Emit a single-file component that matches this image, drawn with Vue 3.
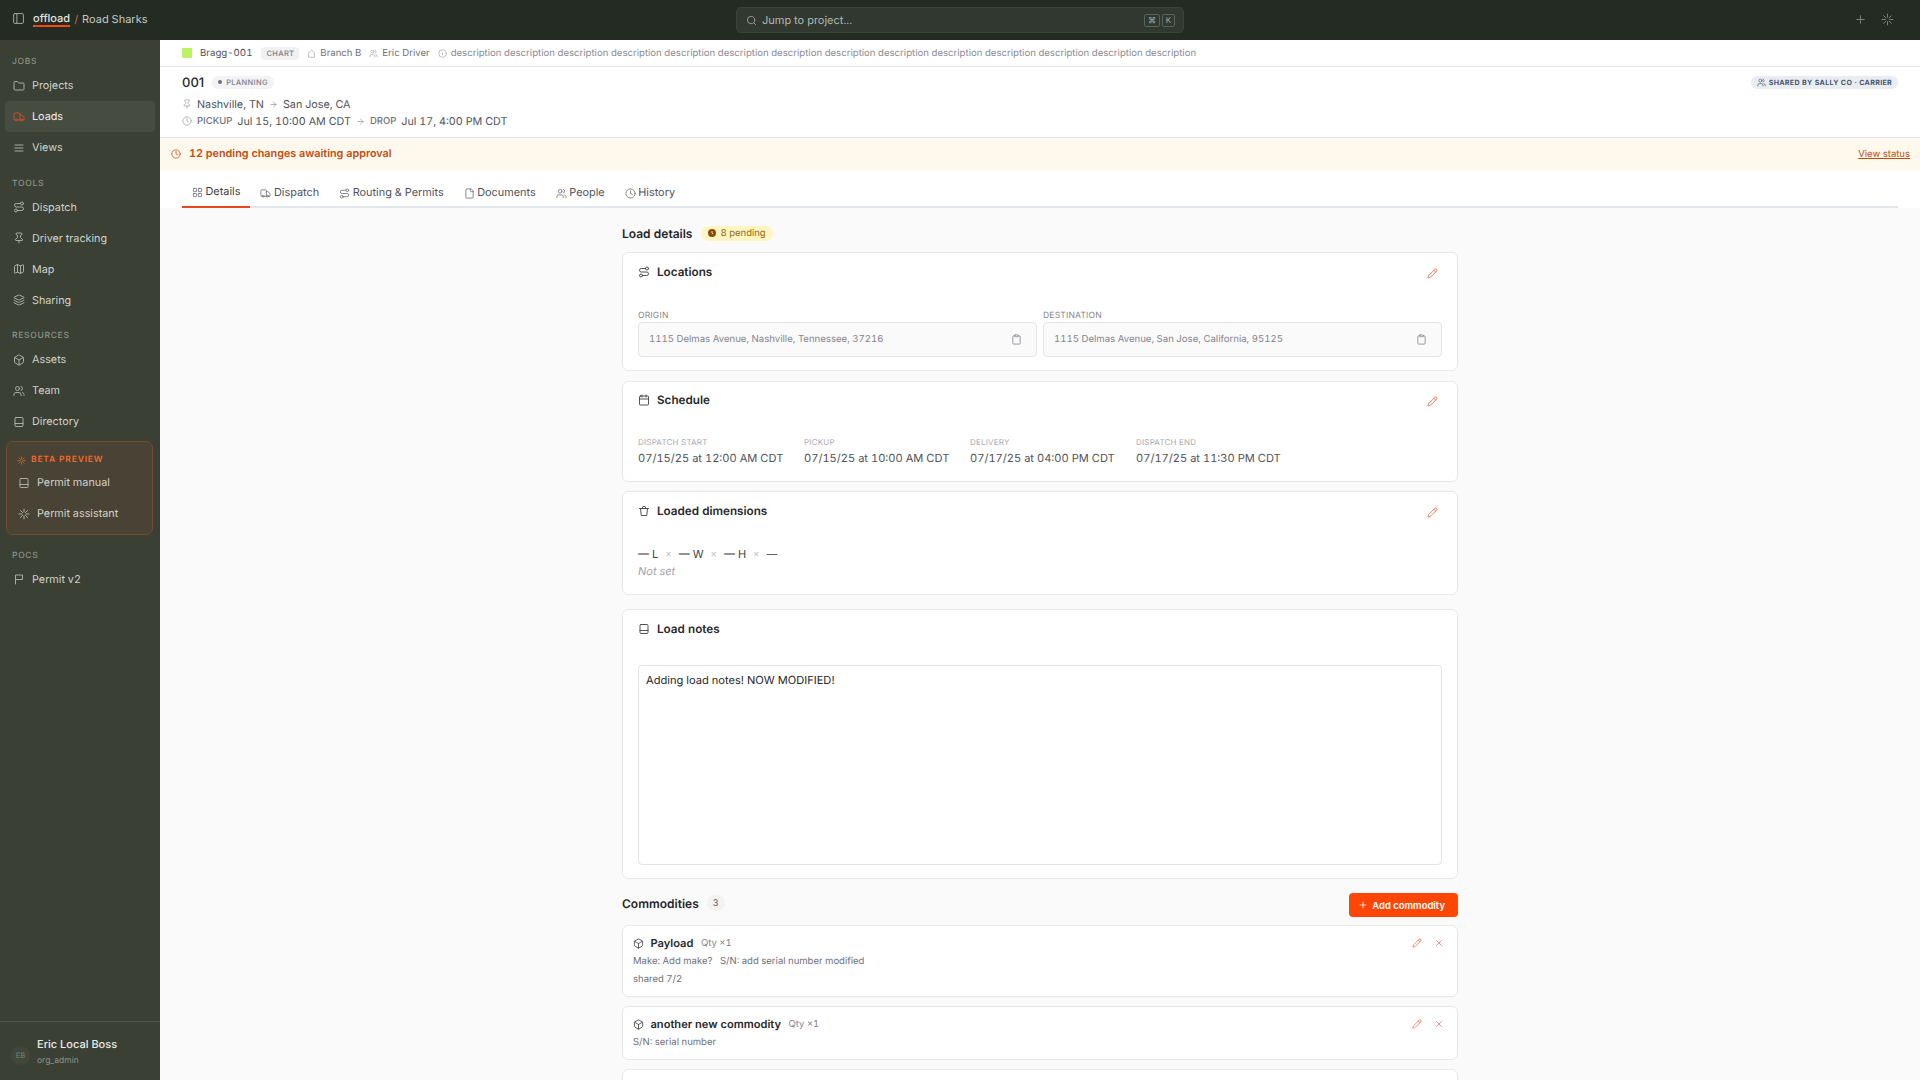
<template>
  <div class="app">
    <header class="topbar">
      <div class="topbar__left">
        <Icon name="panel" :size="13" class="topbar__toggle" />
        <span class="brand">offload</span>
        <span class="brand-sep">/</span>
        <span class="org">Road Sharks</span>
      </div>
      <div class="jump">
        <Icon name="search" :size="11" class="jump__icon" />
        <span class="jump__text">Jump to project...</span>
        <span class="kbd kbd--cmd">⌘</span>
        <span class="kbd">K</span>
      </div>
      <div class="topbar__right">
        <Icon name="plus" :size="13" />
        <Icon name="spark" :size="13" />
      </div>
    </header>

    <div class="body">
      <aside class="sidebar">
        <div class="sidebar__nav">
          <section v-for="group in navGroups" :key="group.label" class="nav-group">
            <div class="nav-group__label">{{ group.label }}</div>
            <div
              v-for="item in group.items"
              :key="item.label"
              class="nav-item"
              :class="{ 'nav-item--active': item.active }"
            >
              <Icon :name="item.icon" :size="12" class="nav-item__icon" />
              <span>{{ item.label }}</span>
            </div>
            <div v-if="group.beta" class="beta">
              <div class="beta__label">
                <Icon name="spark" :size="9" />
                <span>BETA PREVIEW</span>
              </div>
              <div v-for="item in group.beta" :key="item.label" class="nav-item nav-item--beta">
                <Icon :name="item.icon" :size="12" class="nav-item__icon" />
                <span>{{ item.label }}</span>
              </div>
            </div>
          </section>
        </div>
        <div class="user">
          <div class="user__avatar">EB</div>
          <div>
            <div class="user__name">Eric Local Boss</div>
            <div class="user__role">org_admin</div>
          </div>
        </div>
      </aside>

      <main class="main">
        <div class="crumbs">
          <span class="crumbs__swatch" />
          <span class="crumbs__id">Bragg-001</span>
          <span class="crumbs__tag">CHART</span>
          <span class="crumbs__item"><Icon name="home" :size="9" />Branch B</span>
          <span class="crumbs__item"><Icon name="users" :size="9" />Eric Driver</span>
          <span class="crumbs__item crumbs__item--desc"><Icon name="info" :size="9" />{{ description }}</span>
        </div>

        <div class="load-head">
          <div class="load-head__top">
            <span class="load-head__num">001</span>
            <span class="status"><i />PLANNING</span>
            <span class="shared"><Icon name="users" :size="9" />SHARED BY SALLY CO · CARRIER</span>
          </div>
          <div class="load-head__row">
            <Icon name="pin" :size="10" class="muted-icon" />
            <span class="gap-r">Nashville, TN</span>
            <Icon name="arrow" :size="9" class="muted-icon arrow-icon" />
            <span class="gap-l">San Jose, CA</span>
          </div>
          <div class="load-head__row load-head__row--times">
            <Icon name="clock" :size="10" class="muted-icon" />
            <b>PICKUP</b>
            <span>Jul 15, 10:00 AM CDT</span>
            <Icon name="arrow" :size="9" class="muted-icon arrow-icon" />
            <b>DROP</b>
            <span>Jul 17, 4:00 PM CDT</span>
          </div>
        </div>

        <div class="banner">
          <Icon name="clock" :size="10" />
          <strong>12 pending changes awaiting approval</strong>
          <a>View status</a>
        </div>

        <div class="tabs-wrap">
          <nav class="tabs">
            <div
              v-for="tab in tabs"
              :key="tab.label"
              class="tab"
              :class="{ 'tab--active': tab.active }"
            >
              <Icon :name="tab.icon" :size="11" />
              <span>{{ tab.label }}</span>
            </div>
          </nav>
        </div>

        <div class="content">
          <div class="column">
            <div class="section-head">
              <h2>Load details</h2>
              <span class="pending">
                <svg width="8" height="8" viewBox="0 0 8 8">
                  <circle cx="4" cy="4" r="4" fill="#8a4b0f" />
                  <path d="M4 2v2.2l1.4.7" fill="none" stroke="#fef5c3" stroke-width=".8" />
                </svg>
                8 pending
              </span>
            </div>

            <section class="card card--locations">
              <div class="card__head">
                <Icon name="route" :size="12" />
                <h3>Locations</h3>
                <Icon name="pencil" :size="11" class="card__edit" />
              </div>
              <div class="locations">
                <div v-for="loc in locations" :key="loc.label">
                  <div class="field-label">{{ loc.label }}</div>
                  <div class="field">
                    <span>{{ loc.value }}</span>
                    <Icon name="clipboard" :size="11" />
                  </div>
                </div>
              </div>
            </section>

            <section class="card card--schedule">
              <div class="card__head">
                <Icon name="calendar" :size="12" />
                <h3>Schedule</h3>
                <Icon name="pencil" :size="11" class="card__edit" />
              </div>
              <div class="schedule">
                <div v-for="s in schedule" :key="s.label">
                  <div class="schedule__label">{{ s.label }}</div>
                  <div class="schedule__value">{{ s.value }}</div>
                </div>
              </div>
            </section>

            <section class="card card--dims">
              <div class="card__head">
                <Icon name="bin" :size="12" />
                <h3>Loaded dimensions</h3>
                <Icon name="pencil" :size="11" class="card__edit" />
              </div>
              <div class="dims">
                <span>— L</span><i>×</i><span>— W</span><i>×</i><span>— H</span><i>×</i><span>—</span>
              </div>
              <div class="dims__note">Not set</div>
            </section>

            <section class="card card--notes">
              <div class="card__head">
                <Icon name="book" :size="12" />
                <h3>Load notes</h3>
              </div>
              <div class="notes">Adding load notes! NOW MODIFIED!</div>
            </section>

            <div class="comm-head">
              <h2>Commodities</h2>
              <span class="count">3</span>
              <button type="button" class="add-btn">
                <Icon name="plus" :size="10" />
                Add commodity
              </button>
            </div>

            <section v-for="c in commodities" :key="c.name" class="comm">
              <div class="comm__title">
                <Icon name="box" :size="11" />
                <strong>{{ c.name }}</strong>
                <span>Qty ×1</span>
                <div class="comm__actions">
                  <Icon name="pencil" :size="10" class="comm__edit" />
                  <Icon name="x" :size="10" class="comm__del" />
                </div>
              </div>
              <div v-for="line in c.lines" :key="line" class="comm__line">{{ line }}</div>
            </section>
            <section class="comm comm--blank" />
          </div>
        </div>
      </main>
    </div>
  </div>
</template>

<script setup>
import { h } from 'vue'

// lucide-style icon bodies, drawn on a 24 box
const ICONS = {
  panel: '<rect x="3" y="3" width="18" height="18" rx="2"/><path d="M9 3v18"/>',
  folder: '<path d="M20 20a2 2 0 0 0 2-2V8a2 2 0 0 0-2-2h-7.9a2 2 0 0 1-1.69-.9L9.6 3.9A2 2 0 0 0 7.93 3H4a2 2 0 0 0-2 2v13a2 2 0 0 0 2 2Z"/>',
  truck: '<path d="M14 18V6a2 2 0 0 0-2-2H4a2 2 0 0 0-2 2v11a1 1 0 0 0 1 1h2"/><path d="M15 18H9"/><path d="M19 18h2a1 1 0 0 0 1-1v-3.65a1 1 0 0 0-.22-.624l-3.48-4.35A1 1 0 0 0 17.52 8H14"/><circle cx="17" cy="18" r="2"/><circle cx="7" cy="18" r="2"/>',
  menu: '<path d="M4 6h16M4 12h16M4 18h16"/>',
  route: '<circle cx="6" cy="19" r="3"/><path d="M9 19h8.5a3.5 3.5 0 0 0 0-7h-11a3.5 3.5 0 0 1 0-7H15"/><circle cx="18" cy="5" r="3"/>',
  pin: '<path d="M12 17v5"/><path d="M9 10.76a2 2 0 0 1-1.11 1.79l-1.78.9A2 2 0 0 0 5 15.24V16a1 1 0 0 0 1 1h12a1 1 0 0 0 1-1v-.76a2 2 0 0 0-1.11-1.79l-1.78-.9A2 2 0 0 1 15 10.76V7a1 1 0 0 1 1-1 2 2 0 0 0 0-4H8a2 2 0 0 0 0 4 1 1 0 0 1 1 1z"/>',
  map: '<path d="M14.106 5.553a2 2 0 0 0 1.788 0l3.659-1.83A1 1 0 0 1 21 4.619v12.764a1 1 0 0 1-.553.894l-4.553 2.277a2 2 0 0 1-1.788 0l-4.212-2.106a2 2 0 0 0-1.788 0l-3.659 1.83A1 1 0 0 1 3 19.381V6.618a1 1 0 0 1 .553-.894l4.553-2.277a2 2 0 0 1 1.788 0z"/><path d="M15 5.764v15M9 3.236v15"/>',
  layers: '<path d="M12.83 2.18a2 2 0 0 0-1.66 0L2.6 6.08a1 1 0 0 0 0 1.83l8.58 3.91a2 2 0 0 0 1.66 0l8.58-3.9a1 1 0 0 0 0-1.83z"/><path d="M2 12a1 1 0 0 0 .58.91l8.6 3.91a2 2 0 0 0 1.65 0l8.58-3.9A1 1 0 0 0 22 12"/><path d="M2 17a1 1 0 0 0 .58.91l8.6 3.91a2 2 0 0 0 1.65 0l8.58-3.9A1 1 0 0 0 22 17"/>',
  box: '<path d="M21 8a2 2 0 0 0-1-1.73l-7-4a2 2 0 0 0-2 0l-7 4A2 2 0 0 0 3 8v8a2 2 0 0 0 1 1.73l7 4a2 2 0 0 0 2 0l7-4A2 2 0 0 0 21 16Z"/><path d="m3.3 7 8.7 5 8.7-5"/><path d="M12 22V12"/>',
  users: '<path d="M16 21v-2a4 4 0 0 0-4-4H6a4 4 0 0 0-4 4v2"/><path d="M16 3.128a4 4 0 0 1 0 7.744"/><path d="M22 21v-2a4 4 0 0 0-3-3.87"/><circle cx="9" cy="7" r="4"/>',
  book: '<rect x="4" y="3" width="16" height="18" rx="2"/><path d="M4 15h16"/>',
  spark: '<path d="M12 2v6M12 16v6M4.9 4.9l4.2 4.2M14.9 14.9l4.2 4.2M2 12h6M16 12h6M4.9 19.1l4.2-4.2M14.9 9.1l4.2-4.2"/>',
  flag: '<path d="M5 22V4h14v9H5"/>',
  clock: '<circle cx="12" cy="12" r="10"/><path d="M12 6v6l4 2"/>',
  arrow: '<path d="M5 12h14"/><path d="m12 5 7 7-7 7"/>',
  search: '<circle cx="11" cy="11" r="8"/><path d="m21 21-4.3-4.3"/>',
  plus: '<path d="M5 12h14M12 5v14"/>',
  home: '<path d="M4 21V10l8-7 8 7v11z"/>',
  info: '<circle cx="12" cy="12" r="10"/><path d="M12 16v-4M12 8h.01"/>',
  grid: '<rect x="3" y="3" width="7" height="7" rx="1"/><rect x="14" y="3" width="7" height="7" rx="1"/><rect x="14" y="14" width="7" height="7" rx="1"/><rect x="3" y="14" width="7" height="7" rx="1"/>',
  file: '<path d="M15 2H6a2 2 0 0 0-2 2v16a2 2 0 0 0 2 2h12a2 2 0 0 0 2-2V7Z"/><path d="M14 2v4a2 2 0 0 0 2 2h4"/>',
  calendar: '<path d="M8 2v4M16 2v4"/><rect x="3" y="4" width="18" height="18" rx="2"/><path d="M3 10h18"/>',
  clipboard: '<rect x="8" y="2" width="8" height="4" rx="1"/><path d="M16 4h2a2 2 0 0 1 2 2v14a2 2 0 0 1-2 2H6a2 2 0 0 1-2-2V6a2 2 0 0 1 2-2h2"/>',
  pencil: '<path d="M21.174 6.812a1 1 0 0 0-3.986-3.987L3.842 16.174a2 2 0 0 0-.5.83l-1.321 4.352a.5.5 0 0 0 .623.622l4.353-1.32a2 2 0 0 0 .83-.497z"/><path d="m15 5 4 4"/>',
  x: '<path d="M18 6 6 18M6 6l12 12"/>',
  bin: '<path d="M3 7h18"/><path d="M5 7l1.5 14h11L19 7"/><path d="M8 7l2-4h4l2 4"/>',
}

const Icon = (props) =>
  h('svg', {
    width: props.size,
    height: props.size,
    viewBox: '0 0 24 24',
    fill: 'none',
    stroke: 'currentColor',
    'stroke-width': 1.8,
    'stroke-linecap': 'round',
    'stroke-linejoin': 'round',
    innerHTML: ICONS[props.name],
  })
Icon.props = ['name', 'size']

const description = Array(14).fill('description').join(' ')

const navGroups = [
  {
    label: 'JOBS',
    items: [
      { label: 'Projects', icon: 'folder' },
      { label: 'Loads', icon: 'truck', active: true },
      { label: 'Views', icon: 'menu' },
    ],
  },
  {
    label: 'TOOLS',
    items: [
      { label: 'Dispatch', icon: 'route' },
      { label: 'Driver tracking', icon: 'pin' },
      { label: 'Map', icon: 'map' },
      { label: 'Sharing', icon: 'layers' },
    ],
  },
  {
    label: 'RESOURCES',
    items: [
      { label: 'Assets', icon: 'box' },
      { label: 'Team', icon: 'users' },
      { label: 'Directory', icon: 'book' },
    ],
    beta: [
      { label: 'Permit manual', icon: 'book' },
      { label: 'Permit assistant', icon: 'spark' },
    ],
  },
  {
    label: 'POCS',
    items: [{ label: 'Permit v2', icon: 'flag' }],
  },
]

const tabs = [
  { label: 'Details', icon: 'grid', active: true },
  { label: 'Dispatch', icon: 'truck' },
  { label: 'Routing & Permits', icon: 'route' },
  { label: 'Documents', icon: 'file' },
  { label: 'People', icon: 'users' },
  { label: 'History', icon: 'clock' },
]

const locations = [
  { label: 'ORIGIN', value: '1115 Delmas Avenue, Nashville, Tennessee, 37216' },
  { label: 'DESTINATION', value: '1115 Delmas Avenue, San Jose, California, 95125' },
]

const schedule = [
  { label: 'DISPATCH START', value: '07/15/25 at 12:00 AM CDT' },
  { label: 'PICKUP', value: '07/15/25 at 10:00 AM CDT' },
  { label: 'DELIVERY', value: '07/17/25 at 04:00 PM CDT' },
  { label: 'DISPATCH END', value: '07/17/25 at 11:30 PM CDT' },
]

const commodities = [
  { name: 'Payload', lines: ['Make: Add make?\u00a0\u00a0\u00a0S/N: add serial number modified', 'shared 7/2'] },
  { name: 'another new commodity', lines: ['S/N: serial number'] },
]
</script>

<style>
html,
body {
  margin: 0;
  height: 100%;
  overflow: hidden;
}
</style>

<style scoped>
.app {
  display: flex;
  flex-direction: column;
  height: 1080px;
  overflow: hidden;
  font-family: Inter, "Liberation Sans", sans-serif;
  font-variant-numeric: tabular-nums;
  text-rendering: geometricPrecision;
  color: #27272a;
  background: #fafafa;
}

h2,
h3 {
  margin: 0;
}

/* top bar */
.topbar {
  position: relative;
  display: flex;
  flex: none;
  align-items: center;
  justify-content: space-between;
  height: 40px;
  padding: 0 26px 0 12px;
  background: #232b22;
  color: #c6c9c3;
}

.topbar__left {
  display: flex;
  align-items: center;
  margin-top: -3px;
  font-size: 11px;
}

.topbar__toggle {
  margin-right: 8px;
  color: #a5a9a2;
}

.brand {
  color: #e4e5e2;
  font-weight: 500;
  box-shadow: 0 2px 0 #ff4605;
  line-height: 13px;
}

.brand-sep {
  margin: 0 4px;
  color: #d2694a;
}

.jump {
  position: absolute;
  top: 7px;
  left: 736px;
  display: flex;
  align-items: center;
  box-sizing: border-box;
  width: 448px;
  height: 26px;
  padding: 0 8px 0 9px;
  border: 1px solid #3c443a;
  border-radius: 5px;
  background: #31382f;
  font-size: 11px;
}

.jump__icon {
  margin-right: 5px;
  color: #a5a9a2;
}

.jump__text {
  flex: 1;
  color: #b5b8b2;
}

.kbd {
  display: flex;
  align-items: center;
  justify-content: center;
  box-sizing: border-box;
  width: 13px;
  height: 13px;
  border: 1px solid #5b6259;
  border-radius: 2px;
  color: #a5a9a2;
  font-size: 8px;
}

.kbd--cmd {
  width: 16px;
  margin-right: 2px;
}

.topbar__right {
  display: flex;
  gap: 14px;
  margin-top: -1px;
  color: #7c817a;
}

.body {
  display: flex;
  flex: 1;
  min-height: 0;
}

/* sidebar */
.sidebar {
  display: flex;
  flex: none;
  flex-direction: column;
  justify-content: space-between;
  width: 160px;
  background: #3a4033;
  color: #cfd1cb;
}

.sidebar__nav {
  padding-top: 15px;
}

.nav-group {
  margin-bottom: 13.5px;
}

.nav-group__label {
  height: 12px;
  margin-bottom: 2px;
  padding-top: 1px;
  padding-left: 12px;
  color: #8d9187;
  font-size: 8.5px;
  font-weight: 500;
  letter-spacing: 0.7px;
  line-height: 12px;
}

.nav-item {
  display: flex;
  align-items: center;
  gap: 7px;
  height: 31px;
  margin: 0 5px;
  padding-left: 8px;
  border-radius: 4px;
  font-size: 10.8px;
}

.nav-item__icon {
  color: #b5b8ae;
}

.nav-item--active {
  background: #474c41;
  color: #eeefec;
}

.nav-item--active .nav-item__icon {
  color: #d2541f;
}

.beta {
  box-sizing: border-box;
  height: 94px;
  margin: 4px 7px 0 6px;
  padding-top: 13px;
  border: 1px solid #7a4a2c;
  border-radius: 7px;
  background: #494335;
}

.beta__label {
  display: flex;
  align-items: center;
  gap: 5px;
  margin-bottom: 2px;
  padding-left: 10px;
  color: #f26a2c;
  font-size: 8.5px;
  font-weight: 600;
  letter-spacing: 0.8px;
  line-height: 10px;
}

.nav-item--beta {
  margin: 0;
  padding-left: 11px;
}

.user {
  display: flex;
  align-items: center;
  gap: 7px;
  height: 56px;
  padding: 2px 11px 0;
  border-top: 1px solid #50574a;
}

.user__avatar {
  display: flex;
  flex: none;
  align-items: center;
  justify-content: center;
  width: 19px;
  height: 19px;
  margin-top: 6px;
  border-radius: 50%;
  background: #424839;
  color: #7c8076;
  font-size: 7.5px;
}

.user__name {
  color: #ecedea;
  font-size: 11px;
  font-weight: 500;
  line-height: 14px;
}

.user__role {
  margin-top: 4px;
  color: #8f9389;
  font-size: 8.5px;
  line-height: 12px;
}

/* main */
.main {
  display: flex;
  flex: 1;
  flex-direction: column;
  min-width: 0;
  overflow: hidden;
}

.crumbs {
  display: flex;
  flex: none;
  align-items: center;
  box-sizing: border-box;
  height: 27px;
  padding-left: 22px;
  border-bottom: 1px solid #e4e4e7;
  background: #fff;
  font-size: 9.6px;
  color: #71717a;
}

.crumbs__swatch {
  width: 10px;
  height: 10px;
  margin-right: 8px;
  border-radius: 1px;
  background: #bef264;
}

.crumbs__id {
  margin-right: 9px;
  color: #52525b;
  font-size: 9.7px;
}

.crumbs__tag {
  margin-right: 8px;
  padding: 2px 5px;
  border-radius: 4px;
  background: #f1f1f3;
  color: #8a8a93;
  font-size: 7.5px;
  font-weight: 600;
  letter-spacing: 0.3px;
}

.crumbs__item {
  display: flex;
  align-items: center;
  gap: 4px;
  margin-right: 8px;
  white-space: nowrap;
}

.crumbs__item svg {
  color: #a1a1aa;
}

.crumbs__item--desc {
  color: #8a8a93;
}

.load-head {
  flex: none;
  box-sizing: border-box;
  height: 71px;
  padding: 7px 22px 0;
  border-bottom: 1px solid #e4e4e7;
  background: #fff;
}

.load-head__top {
  display: flex;
  align-items: center;
  height: 16px;
  margin-bottom: 5.5px;
}

.load-head__num {
  margin-top: 2px;
  margin-right: 8px;
  color: #27272a;
  font-size: 13px;
  font-variant-numeric: normal;
  font-weight: 500;
}

.status {
  display: flex;
  align-items: center;
  gap: 4px;
  padding: 2px 6px;
  border-radius: 6px;
  background: #f3f3f5;
  color: #8d8d96;
  font-size: 7.5px;
  font-weight: 600;
  letter-spacing: 0.3px;
}

.status i {
  width: 4px;
  height: 4px;
  border-radius: 50%;
  background: #6f6f78;
}

.shared {
  display: flex;
  align-items: center;
  gap: 3px;
  margin-left: auto;
  padding: 2px 6px;
  border-radius: 6px;
  background: #e9edf1;
  color: #46566f;
  font-size: 7.1px;
  font-weight: 700;
  letter-spacing: 0.3px;
}

.load-head__row {
  display: flex;
  align-items: center;
  height: 17px;
  color: #52525b;
  font-size: 10.75px;
}

.muted-icon {
  color: #a1a1aa;
}

.arrow-icon {
  stroke-width: 2.2;
}

.load-head__row > svg:first-child {
  margin-right: 5px;
}

.gap-r {
  margin-right: 5px;
}

.gap-l {
  margin-left: 5px;
}

.load-head__row--times b {
  margin-right: 5px;
  color: #71717a;
  font-size: 9.5px;
  font-weight: 500;
}

.load-head__row--times svg:nth-of-type(2) {
  margin: 0 5px;
}

.banner {
  display: flex;
  flex: none;
  align-items: center;
  box-sizing: border-box;
  height: 32px;
  padding: 0 10px 0 11px;
  background: #fff8ec;
  color: #bf4d10;
  font-size: 10.8px;
}

.banner strong {
  margin-left: 8px;
  margin-bottom: 2px;
  font-weight: 600;
}

.banner a {
  margin-left: auto;
  font-size: 9.5px;
  text-decoration: underline;
}

.tabs-wrap {
  flex: none;
  padding: 0 22px;
  background: #fff;
}

.tabs {
  display: flex;
  box-sizing: border-box;
  height: 38px;
  border-bottom: 2px solid #e2e5e9;
}

.tab {
  display: flex;
  align-items: center;
  gap: 2.5px;
  height: 38px;
  box-sizing: border-box;
  margin-bottom: -2px;
  padding: 6px 10px 0;
  color: #52525b;
  font-size: 10.9px;
}

.tab svg {
  margin-top: 2px;
  color: #71717a;
}

.tab--active {
  border-bottom: 2px solid #e8481c;
  color: #3f3f46;
}

.content {
  flex: 1;
  min-height: 0;
  overflow: hidden;
}

.column {
  width: 836px;
  margin: 0 auto;
  padding-top: 14px;
}

.section-head {
  display: flex;
  align-items: center;
  height: 22px;
  margin-bottom: 8px;
}

.section-head h2,
.comm-head h2 {
  color: #27272a;
  font-size: 12px;
  font-weight: 600;
}

.pending {
  display: flex;
  align-items: center;
  gap: 4px;
  margin-left: 9px;
  padding: 2px 7px;
  border-radius: 9px;
  background: #fef5c3;
  color: #96690f;
  font-size: 9.5px;
}

.card {
  box-sizing: border-box;
  margin-bottom: 10px;
  padding: 0 15px;
  border: 1px solid #e7e7e9;
  border-radius: 6px;
  background: #fff;
}

.card__head {
  display: flex;
  align-items: center;
  gap: 7px;
  height: 38px;
  color: #3f3f46;
}

.card__head h3 {
  margin-bottom: 1px;
  color: #27272a;
  font-size: 11.7px;
  font-weight: 600;
}

.card__edit {
  margin: 3px 4px 0 auto;
  color: #f4683a;
}

.card--locations {
  height: 119px;
}

.card--schedule {
  height: 101px;
  margin-bottom: 9px;
}

.card--schedule .card__head {
  height: 36px;
}

.card--dims {
  height: 104px;
  margin-bottom: 14px;
}

.card--notes {
  height: 270px;
  margin-bottom: 14px;
}

.locations {
  display: grid;
  grid-template-columns: 1fr 1fr;
  gap: 6px;
  margin-top: 20px;
}

.field-label {
  color: #85858e;
  font-size: 8.5px;
  line-height: 10px;
  letter-spacing: 0.2px;
}

.field {
  display: flex;
  align-items: center;
  justify-content: space-between;
  box-sizing: border-box;
  height: 35px;
  margin-top: 1px;
  padding: 0 14px 0 10px;
  border: 1px solid #e4e4e7;
  border-radius: 4px;
  background: #fafafa;
  color: #85858e;
  font-size: 9.6px;
}

.schedule {
  display: grid;
  grid-template-columns: repeat(4, 166px);
  margin-top: 19px;
}

.schedule__label {
  color: #a8a8b0;
  font-size: 8px;
  line-height: 10px;
  letter-spacing: 0.2px;
}

.schedule__value {
  margin-top: 3.5px;
  color: #52525b;
  font-size: 11.1px;
  line-height: 15px;
}

.dims {
  display: flex;
  align-items: center;
  gap: 6px;
  margin-top: 17px;
  color: #3f3f46;
  font-size: 11px;
  line-height: 14px;
}

.dims i {
  margin: 0 1px;
  color: #c4c4c8;
  font-size: 10px;
  font-style: normal;
}

.dims__note {
  margin-top: 3px;
  color: #a1a1aa;
  font-size: 11px;
  font-style: italic;
}

.notes {
  box-sizing: border-box;
  height: 200px;
  margin-top: 17px;
  padding: 7px;
  border: 1px solid #e4e4e7;
  border-radius: 4px;
  color: #27272a;
  font-size: 11.1px;
  line-height: 14px;
}

.comm-head {
  display: flex;
  align-items: center;
  height: 24px;
  margin-bottom: 8px;
}

.comm-head h2,
.count {
  margin-bottom: 4px;
}

.count {
  display: flex;
  align-items: center;
  justify-content: center;
  width: 18px;
  height: 16px;
  margin-left: 8px;
  border-radius: 8px;
  background: #f2f2f3;
  color: #52525b;
  font-size: 9px;
}

.add-btn {
  display: flex;
  align-items: center;
  gap: 4px;
  box-sizing: border-box;
  height: 24px;
  margin-left: auto;
  padding: 0 13px 0 9px;
  border: 0;
  border-radius: 4px;
  background: #ff4605;
  color: #fff;
  font-family: inherit;
  font-size: 9.5px;
  font-weight: 600;
}

.comm {
  box-sizing: border-box;
  margin-bottom: 9px;
  padding: 8px 10px 7px;
  border: 1px solid #e7e7e9;
  border-radius: 6px;
  background: #fff;
}

.comm--blank {
  height: 40px;
}

.comm__title {
  display: flex;
  align-items: center;
  gap: 6.5px;
  height: 18px;
  margin-bottom: 1px;
  color: #3f3f46;
}

.comm__title strong {
  color: #27272a;
  font-size: 11.1px;
  font-weight: 600;
}

.comm__title span {
  margin-left: 1px;
  color: #85858e;
  font-size: 9.5px;
}

.comm__actions {
  display: flex;
  gap: 12px;
  margin-left: auto;
  margin-right: 3px;
}

.comm__edit {
  color: #f4683a;
}

.comm__del {
  color: #ef6a6a;
}

.comm__line {
  color: #6f6f78;
  font-size: 9.5px;
  line-height: 18px;
}
</style>
